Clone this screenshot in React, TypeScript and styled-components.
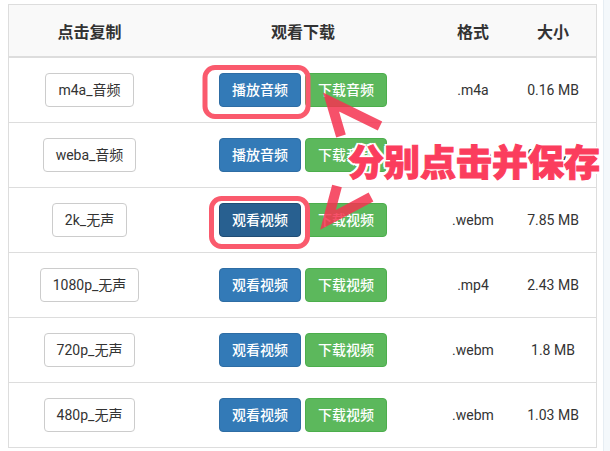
import { createGlobalStyle, styled } from "styled-components";

const GlobalStyle = createGlobalStyle`
  html, body {
    margin: 0;
    padding: 0;
    background: #ffffff;
  }
  body {
    font-family: Roboto, "Noto Sans CJK SC", sans-serif;
    color: #333333;
  }
`;

const Page = styled.div`
  position: relative;
  display: flex;
  width: 610px;
  height: 451px;
  overflow: hidden;
`;

const TableBox = styled.div`
  margin: 4px 0 0 8px;
  width: 587px;
  border: 1px solid #dddddd;
  border-bottom: none;
  align-self: flex-start;
`;

const SidePanel = styled.div`
  margin-left: 6px;
  flex: 1;
  background: #f4f8fb;
  border-left: 1px solid #e6edf3;
`;

const cols = "161px 266px 74px 86px";

const HeadRow = styled.div`
  display: grid;
  grid-template-columns: ${cols};
  height: 51px;
  background: #f9f9f9;
  border-bottom: 2px solid #dddddd;
`;

const HeadCell = styled.div`
  display: flex;
  align-items: center;
  justify-content: center;
  font-family: Roboto, "Noto Sans CJK SC", sans-serif;
  font-size: 16px;
  font-weight: 700;
  color: #333333;
`;

const Row = styled.div`
  display: grid;
  grid-template-columns: ${cols};
  height: 64px;
  border-bottom: 1px solid #dddddd;
`;

const Cell = styled.div`
  display: flex;
  align-items: center;
  justify-content: center;
  gap: 4px;
  font-size: 14px;
  color: #333333;
`;

const CopyButton = styled.button`
  font-family: Roboto, "Noto Sans CJK SC", sans-serif;
  font-size: 14px;
  line-height: 20px;
  padding: 6px 12px;
  border: 1px solid #cccccc;
  border-radius: 4px;
  background: #ffffff;
  color: #333333;
`;

const ActionButton = styled.button<{ $tone: "blue" | "green"; $active?: boolean }>`
  font-family: Roboto, "Noto Sans CJK SC", sans-serif;
  font-size: 14px;
  font-weight: 500;
  line-height: 20px;
  padding: 6px 12px;
  border-radius: 4px;
  color: #ffffff;
  border: 1px solid
    ${(p) => (p.$tone === "green" ? "#4cae4c" : p.$active ? "#204d74" : "#2e6da4")};
  background: ${(p) => (p.$tone === "green" ? "#5cb85c" : p.$active ? "#286090" : "#337ab7")};
`;

const Overlay = styled.svg`
  position: absolute;
  left: 0;
  top: 0;
  pointer-events: none;
`;

const Callout = styled.div`
  position: absolute;
  left: 348px;
  top: 142px;
  font-family: "Noto Sans CJK SC", sans-serif;
  font-size: 36px;
  font-weight: 900;
  line-height: 36px;
  color: #fb3d5d;
  -webkit-text-stroke: 1px #fb3d5d;
  white-space: nowrap;
  text-shadow: 2.5px 0 #fff, -2.5px 0 #fff, 0 2.5px #fff, 0 -2.5px #fff, 2px 2px #fff,
    -2px 2px #fff, 2px -2px #fff, -2px -2px #fff;
`;

type Item = {
  name: string;
  audio: boolean;
  format: string;
  size: string;
  active?: boolean;
};

const items: Item[] = [
  { name: "m4a_音频", audio: true, format: ".m4a", size: "0.16 MB" },
  { name: "weba_音频", audio: true, format: ".weba", size: "0.15 MB" },
  { name: "2k_无声", audio: false, format: ".webm", size: "7.85 MB", active: true },
  { name: "1080p_无声", audio: false, format: ".mp4", size: "2.43 MB" },
  { name: "720p_无声", audio: false, format: ".webm", size: "1.8 MB" },
  { name: "480p_无声", audio: false, format: ".webm", size: "1.03 MB" },
];

const MARK = "rgba(245, 50, 80, 0.85)";

export default function App() {
  return (
    <>
      <GlobalStyle />
      <Page>
        <TableBox>
          <HeadRow>
            <HeadCell>点击复制</HeadCell>
            <HeadCell>观看下载</HeadCell>
            <HeadCell>格式</HeadCell>
            <HeadCell>大小</HeadCell>
          </HeadRow>
          {items.map((it) => (
            <Row key={it.name}>
              <Cell>
                <CopyButton>{it.name}</CopyButton>
              </Cell>
              <Cell>
                <ActionButton $tone="blue" $active={it.active}>
                  {it.audio ? "播放音频" : "观看视频"}
                </ActionButton>
                <ActionButton $tone="green">{it.audio ? "下载音频" : "下载视频"}</ActionButton>
              </Cell>
              <Cell>{it.format}</Cell>
              <Cell>{it.size}</Cell>
            </Row>
          ))}
        </TableBox>
        <SidePanel />

        {/* annotation marks drawn over the table */}
        <Overlay width="610" height="451" viewBox="0 0 610 451">
          <rect x="205" y="67.5" width="103" height="49" rx="10" fill="none" stroke="#fa5a6d" strokeWidth="5" />
          <rect x="211.5" y="198.5" width="96" height="48" rx="10" fill="none" stroke="#fa5a6d" strokeWidth="5" />
          <path
            d="M 341 136 L 331 102 L 380 126"
            fill="none"
            stroke={MARK}
            strokeWidth="10"
            strokeLinejoin="miter"
            strokeMiterlimit="10"
          />
          <path
            d="M 337 186 L 328 220 L 371 197"
            fill="none"
            stroke={MARK}
            strokeWidth="10"
            strokeLinejoin="miter"
            strokeMiterlimit="10"
          />
        </Overlay>
        <Callout>分别点击并保存</Callout>
      </Page>
    </>
  );
}
